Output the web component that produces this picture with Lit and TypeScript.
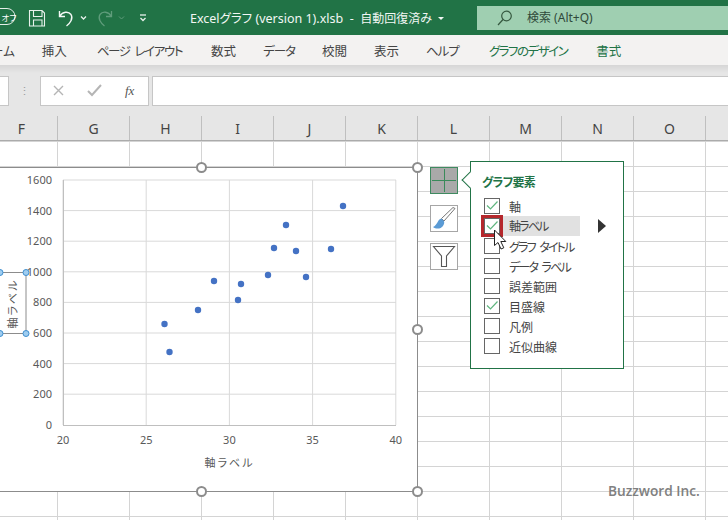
import { LitElement, html, css, svg } from "lit";
import { customElement } from "lit/decorators.js";

const points = [
  [164.5, 324], [169.5, 352], [198, 310], [214, 281], [238, 300], [241, 284], [268, 275],
  [274, 248], [286, 225], [296, 251], [306, 277], [331, 249], [343, 206],
];
const yLabels = [1600, 1400, 1200, 1000, 800, 600, 400, 200, 0];
const xLabels = [20, 25, 30, 35, 40];
const columns = ["F", "G", "H", "I", "J", "K", "L", "M", "N", "O", ""];
const tabs = [
  ["ホーム", ""], ["挿入", ""], ["ページ レイアウト", "kana"], ["数式", ""], ["データ", "short"], ["校閲", ""],
  ["表示", ""], ["ヘルプ", "short"], ["グラフのデザイン", "green kana long"], ["書式", "green"],
];
const elements: [string, boolean, string][] = [
  ["軸", true, ""], ["軸ラベル", true, "kana"], ["グラフ タイトル", false, "kana"], ["データ ラベル", false, "kana"],
  ["誤差範囲", false, ""], ["目盛線", true, ""], ["凡例", false, ""], ["近似曲線", false, ""],
];

const plotY = (i: number) => 180 + i * 30.6;
const plotX = (i: number) => 63 + i * 83.2;

@customElement("app-root")
export class AppRoot extends LitElement {
  static styles = css`
    :host {
      display: block;
      width: 728px;
      height: 520px;
      overflow: hidden;
      position: relative;
      background: #e6e6e6;
      font-family: "Noto Sans", "Noto Sans CJK JP", sans-serif;
      font-feature-settings: "palt";
      color: #444;
    }
    .title-bar {
      height: 35px;
      background: #217346;
      display: flex;
      align-items: flex-start;
      color: #fff;
      position: relative;
    }
    .qat {
      width: 190px;
      flex: none;
      height: 35px;
    }
    .qat svg { display: block; }
    .doc-title {
      width: 287px;
      flex: none;
      height: 35px;
      display: flex;
      align-items: center;
      font-size: 12.5px;
      white-space: pre;
      color: #f2f7f4;
    }
    .doc-title .state { font-size: 12px; }
    .caret {
      margin-left: 6px;
      margin-top: 2px;
      border-top: 3px solid #f2f7f4;
      border-left: 3.5px solid transparent;
      border-right: 3.5px solid transparent;
    }
    .search {
      flex: 1;
      height: 24px;
      margin-top: 6px;
      background: #9fcfb1;
      color: #2f4a3a;
      font-size: 12px;
      line-height: 24px;
      display: flex;
      align-items: center;
      gap: 14px;
      padding-left: 20px;
    }
    .tabs {
      height: 30px;
      background: #f3f2f1;
      display: flex;
      align-items: center;
      gap: 27px;
      margin-left: -21px;
      font-size: 12.5px;
      white-space: nowrap;
      color: #444;
    }
    .tabs .green { color: #217346; }
    .tabs .short { letter-spacing: -1px; }
    .tabs .kana {
      letter-spacing: -1.4px;
      word-spacing: 3px;
      margin: 0 2px 0 3px;
    }
    .tabs .long { letter-spacing: -1.5px; }
    .formula-bar {
      height: 51px;
      background: linear-gradient(#d6d6d6, #e6e6e6 8px);
      display: flex;
      align-items: center;
      padding-top: 1px;
      box-sizing: border-box;
    }
    .name-box {
      width: 9px;
      height: 30px;
      background: #fff;
      border: 1px solid #c6c6c6;
      border-left: none;
      box-sizing: border-box;
      flex: none;
    }
    .grip {
      width: 31px;
      flex: none;
      text-align: center;
      color: #9a9a9a;
      font-size: 11px;
      line-height: 12px;
    }
    .fx-box {
      width: 109px;
      height: 30px;
      flex: none;
      background: #fff;
      border: 1px solid #c6c6c6;
      box-sizing: border-box;
      margin-right: 3px;
    }
    .fx-box svg { display: block; }
    .fx-box text {
      font-family: "Liberation Serif", serif;
      font-style: italic;
      font-size: 13px;
      fill: #555;
    }
    .formula-input {
      flex: 1;
      height: 30px;
      background: #fff;
      border: 1px solid #c6c6c6;
      border-right: none;
      box-sizing: border-box;
    }
    .col-headers {
      height: 24px;
      display: flex;
      margin-left: -14px;
      background: #e6e6e6;
      font-size: 14px;
      color: #444;
    }
    .col-headers div {
      flex: none;
      width: 72px;
      box-sizing: border-box;
      border-right: 1px solid #bfbfbf;
      text-align: center;
      line-height: 25px;
    }
    .sheet {
      position: relative;
      height: 380px;
      background-color: #fff;
      background-image:
        linear-gradient(#d4d4d4 1px, transparent 1px),
        linear-gradient(90deg, #d4d4d4 1px, transparent 1px);
      background-size: 72px 25px;
      background-position: -15px 0;
      border-top: 1px solid #ababab;
      box-sizing: border-box;
    }
    .chart {
      position: absolute;
      left: 0;
      top: -1px;
      display: block;
    }
    .chart text {
      font-family: "Noto Sans", "Noto Sans CJK JP", sans-serif;
      fill: #595959;
      font-size: 11px;
    }
    .side-btn {
      position: absolute;
      left: 430px;
      width: 28px;
      height: 27px;
      box-sizing: border-box;
      background: #fff;
      border: 1px solid #a6a6a6;
    }
    .side-btn svg { display: block; }
    .side-btn.plus {
      top: 26px;
      background: #a9a9a9;
      border-color: #3f8a60;
    }
    .side-btn.brush { top: 64px; }
    .side-btn.filter { top: 102px; }
    .popup {
      position: absolute;
      left: 470px;
      top: 20px;
      width: 154px;
      height: 208px;
      box-sizing: border-box;
      background: #fff;
      border: 1px solid #217346;
      padding: 12px 0 0 13px;
    }
    .notch {
      position: absolute;
      left: -7px;
      top: 12px;
      width: 12px;
      height: 12px;
      transform: rotate(45deg);
      background: #fff;
      border-left: 1px solid #217346;
      border-bottom: 1px solid #217346;
      box-sizing: border-box;
    }
    .popup-title {
      font-size: 12px;
      font-weight: 700;
      color: #217346;
      line-height: 18px;
      height: 22px;
      margin-left: -2px;
      letter-spacing: -0.8px;
    }
    .row {
      height: 20px;
      display: flex;
      align-items: center;
      font-size: 12px;
      color: #444;
      white-space: nowrap;
      gap: 9px;
    }
    .label { padding-top: 1px; }
    .label.kana {
      letter-spacing: -1.8px;
      word-spacing: 3px;
    }
    .box {
      width: 16px;
      height: 16px;
      flex: none;
      box-sizing: border-box;
      border: 1px solid #666;
      background: #fff;
    }
    .box svg { display: block; }
    .row.active { position: relative; }
    .row.active .label {
      background: #e1e1e1;
      width: 77px;
      height: 20px;
      line-height: 21px;
      padding: 0 0 0 6px;
      margin-left: -6px;
      box-sizing: border-box;
    }
    .row.active .box { outline: 3px solid #b5272c; }
    .more {
      position: absolute;
      left: 114px;
      top: 3px;
      width: 0;
      height: 0;
      border-left: 8px solid #333;
      border-top: 7px solid transparent;
      border-bottom: 7px solid transparent;
    }
    .cursor {
      position: absolute;
      left: 492px;
      top: 88px;
      display: block;
    }
    .watermark {
      position: absolute;
      left: 608px;
      top: 340px;
      font-family: "Open Sans", sans-serif;
      font-size: 13.7px;
      font-weight: 600;
      color: #808080;
      white-space: nowrap;
    }
  `;

  private handle(x: number, y: number) {
    return svg`<circle cx=${x} cy=${y} r="4.5" fill="#fff" stroke="#8c8c8c" stroke-width="2"></circle>`;
  }

  private labelHandle(x: number, y: number) {
    return svg`<circle cx=${x} cy=${y} r="3" fill="#9fcdf0" stroke="#3f8fd0" stroke-width="1"></circle>`;
  }

  private chart() {
    return html`<svg class="chart" width="430" height="380" viewBox="0 140 430 380">
      <rect x="-5" y="167.5" width="422.5" height="324" fill="#fff" stroke="#8c8c8c"></rect>
      ${yLabels.slice(0, 8).map((_, i) => svg`<line x1="63" x2="396" y1=${plotY(i)} y2=${plotY(i)} stroke="#d9d9d9"></line>`)}
      ${xLabels.map((_, i) => svg`<line x1=${plotX(i)} x2=${plotX(i)} y1="180" y2="425" stroke="#d9d9d9"></line>`)}
      <line x1="63.5" x2="63.5" y1="180" y2="425" stroke="#bfbfbf"></line>
      <line x1="63" x2="396" y1="425.5" y2="425.5" stroke="#bfbfbf"></line>
      ${yLabels.map((v, i) => svg`<text x="52" y=${plotY(i) + 4} text-anchor="end">${v}</text>`)}
      ${xLabels.map((v, i) => svg`<text x=${plotX(i)} y="444" text-anchor="middle">${v}</text>`)}
      <text x="229.500" y="467" text-anchor="middle" letter-spacing="2">軸ラベル</text>
      ${points.map(([x, y]) => svg`<circle cx=${x} cy=${y} r="3.2" fill="#4472c4"></circle>`)}
      <rect x="-5" y="272.5" width="31" height="61" fill="#fff" stroke="#8c8c8c"></rect>
      <text transform="translate(17 303.500) rotate(-90)" text-anchor="middle" letter-spacing="2">軸ラベル</text>
      ${this.labelHandle(0, 272.5)}${this.labelHandle(26, 272.5)}
      ${this.labelHandle(0, 333.5)}${this.labelHandle(26, 333.5)}
      ${this.handle(201.5, 167.5)}${this.handle(417.5, 167.5)}${this.handle(417.5, 329.5)}
      ${this.handle(201.5, 491.5)}${this.handle(417.5, 491.5)}
    </svg>`;
  }

  private qat() {
    return html`<svg width="190" height="35" viewBox="0 0 190 35" fill="none" stroke="#fff">
      <rect x="-20" y="8.500" width="35" height="16" rx="8" stroke="#e4eee8"></rect>
      <text x="1.500" y="20.500" font-size="8.500" fill="#fff" stroke="none" font-family="Noto Sans CJK JP">オフ</text>
      <path d="M29.500 10.500h12.500l2.500 2.500v13h-15z M33.500 10.500v6h8.500v-6 M33.500 26v-6h8.500v6" stroke="#e8f1ec" stroke-width="1.100"></path>
      <path d="M59.500 11v5.500h5.500 M60 16c2.500-4.500 8.500-5 11-1.500c2.500 4-1 9-4.500 11.500" stroke="#f4f8f6" stroke-width="1.400"></path>
      <path d="M81 16.500l2.500 2.500l2.500-2.500" stroke="#e8f1ec" stroke-width="1.300"></path>
      <path d="M111.500 11v5.500h-5.500 M111 16c-2.500-4.500-8.500-5-11-1.500c-2.500 4 1 9 4.500 11.500" stroke="#5f9c7b" stroke-width="1.300"></path>
      <path d="M119 16.500l2.500 2.500l2.500-2.500" stroke="#5f9c7b"></path>
      <path d="M140 15h6" stroke="#e8f1ec" stroke-width="1.300"></path>
      <path d="M140.500 18l2.500 2.500l2.500-2.500" stroke="#e8f1ec" stroke-width="1.300"></path>
    </svg>`;
  }

  render() {
    return html`
      <div class="title-bar">
        <div class="qat">${this.qat()}</div>
        <div class="doc-title"><span>Excelグラフ (version 1).xlsb  -  </span><span class="state">自動回復済み</span><span class="caret"></span></div>
        <div class="search">
          <svg width="16" height="16" viewBox="0 0 16 16" fill="none" stroke="#35583f" stroke-width="1.200">
            <circle cx="9.500" cy="6" r="4.800"></circle>
            <path d="M6 9.500L1 15"></path>
          </svg>
          <span>検索 (Alt+Q)</span>
        </div>
      </div>
      <div class="tabs">
        ${tabs.map(([t, c]) => html`<span class=${c}>${t}</span>`)}
      </div>
      <div class="formula-bar">
        <div class="name-box"></div>
        <div class="grip">⋮</div>
        <div class="fx-box">
          <svg width="107" height="28" viewBox="0 0 107 28" fill="none">
            <path d="M13 9l9 9 M22 9l-9 9" stroke="#b5b5b5" stroke-width="1.400"></path>
            <path d="M47 14l4 4l9-10" stroke="#b5b5b5" stroke-width="2"></path>
            <text x="84" y="18">fx</text>
          </svg>
        </div>
        <div class="formula-input"></div>
      </div>
      <div class="col-headers">
        ${columns.map((c) => html`<div>${c}</div>`)}
      </div>
      <div class="sheet">
        ${this.chart()}
        <div class="side-btn plus">
          <svg width="26" height="25" viewBox="0 0 26 25" stroke="#3a8a5a" stroke-width="1">
            <path d="M13.500 1v23 M1 12.500h24"></path>
          </svg>
        </div>
        <div class="side-btn brush">
          <svg width="26" height="25" viewBox="0 0 26 25" fill="none">
            <path d="M24 2.500L13 15l-2.500-2.500L22 1.500z" fill="#fff" stroke="#777"></path>
            <path d="M10.500 12.500c-4 .5-4 7-8.500 8.500c3 2.500 8 2 10-1c1-1.500 1.500-3 1-5z" fill="#5b9bd5"></path>
          </svg>
        </div>
        <div class="side-btn filter">
          <svg width="26" height="25" viewBox="0 0 26 25" fill="none" stroke="#555" stroke-width="1.100">
            <path d="M2.500 2.500h21l-8 9.500v10.500h-5v-10.500z"></path>
          </svg>
        </div>
        <div class="popup">
          <div class="notch"></div>
          <div class="popup-title">グラフ要素</div>
          ${elements.map(([label, on, cls], i) => html`
            <div class="row ${i === 1 ? "active" : ""}">
              <div class="box">
                ${on ? html`<svg width="14" height="14" viewBox="0 0 14 14" fill="none" stroke="#5fb57e" stroke-width="1.200"><path d="M2 6.500l3.500 3.500l7-7.500"></path></svg>` : ""}
              </div>
              <span class="label ${cls}">${label}</span>
              ${i === 1 ? html`<div class="more"></div>` : ""}
            </div>`)}
        </div>
        <svg class="cursor" width="18" height="28" viewBox="0 0 18 28">
          <path d="M2.500 1v15.500l3.500-3l3 6.500l2.800-1.200l-3-6.300h5z" fill="#fff" stroke="#222" stroke-width="1"></path>
        </svg>
        <div class="watermark">Buzzword Inc.</div>
      </div>
    `;
  }
}
